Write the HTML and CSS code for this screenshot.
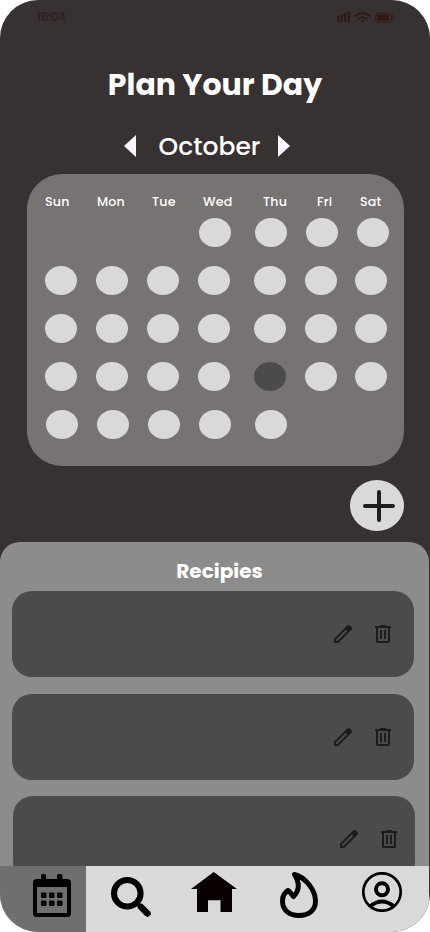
FILE: index.html
```html
<!DOCTYPE html>
<html lang="en">
<head>
<meta charset="utf-8">
<title>Plan Your Day</title>
<link rel="stylesheet" href="styles.css">
</head>
<body>
<svg width="0" height="0" class="defs">
  <symbol id="edit" viewBox="0 -960 960 960"><path d="M200-200h57l391-391-57-57-391 391v57Zm-80 80v-170l528-527q12-11 26.5-17t30.5-6q16 0 31 6t26 18l55 56q12 11 17.5 26t5.5 30q0 16-5.5 30.5T817-647L290-120H120Zm640-584-56-56 56 56Zm-141 85-28-29 57 57-29-28Z"/></symbol>
  <symbol id="trash" viewBox="0 -960 960 960"><path d="M280-120q-33 0-56.5-23.5T200-200v-520h-40v-80h200v-40h240v40h200v80h-40v520q0 33-23.5 56.5T680-120H280Zm400-600H280v520h400v-520ZM360-280h80v-360h-80v360Zm160 0h80v-360h-80v360Z"/></symbol>
</svg>
<div class="phone">
  <header class="status">
    <span class="time">16:04</span>
    <svg class="signals" width="58" height="12" viewBox="0 0 58 12">
      <path d="M1.2 6v4.500M4.700 4.500v6M8.200 3v7.500M11.700 1.500v9" fill="none" stroke="currentColor" stroke-width="2.300" stroke-linecap="round"/>
      <path d="M18 5q7.500-6 15 0M21 8q4.500-3.500 9 0" fill="none" stroke="currentColor" stroke-width="1.700" stroke-linecap="round"/>
      <circle cx="25.500" cy="10" r="1.300"/>
      <rect x="38.800" y="2.300" width="15.500" height="9" rx="2" fill="none" stroke="currentColor"/>
      <rect x="40" y="3.700" width="12" height="6.300"/>
      <path d="M55 3.200q2 1 2 3.500t-2 3.500" fill="none" stroke="currentColor"/>
    </svg>
  </header>

  <h1 class="title">Plan Your Day</h1>

  <div class="month">
    <svg width="12" height="22" viewBox="0 0 12 22"><path d="M12 0v22L0 11z"/></svg>
    <span class="month-name">October</span>
    <svg width="12" height="22" viewBox="0 0 12 22"><path d="M0 0v22l12-11z"/></svg>
  </div>

  <section class="calendar">
    <div class="weekdays"><span>Sun</span><span>Mon</span><span>Tue</span><span>Wed</span><span>Thu</span><span>Fri</span><span>Sat</span></div>
    <div class="week first"><i></i><i></i><i></i><i class="day"></i><i class="day"></i><i class="day"></i><i class="day"></i></div>
    <div class="week"><i class="day"></i><i class="day"></i><i class="day"></i><i class="day"></i><i class="day"></i><i class="day"></i><i class="day"></i></div>
    <div class="week"><i class="day"></i><i class="day"></i><i class="day"></i><i class="day"></i><i class="day"></i><i class="day"></i><i class="day"></i></div>
    <div class="week"><i class="day"></i><i class="day"></i><i class="day"></i><i class="day"></i><i class="day selected"></i><i class="day"></i><i class="day"></i></div>
    <div class="week last"><i class="day"></i><i class="day"></i><i class="day"></i><i class="day"></i><i class="day"></i></div>
  </section>

  <button class="add" aria-label="Add"><svg width="54" height="51" viewBox="0 0 54 51"><path d="M29 12v28M15 26h28" fill="none" stroke="#1e1e1e" stroke-width="4" stroke-linecap="round"/></svg></button>

  <section class="sheet">
    <h2 class="sheet-title">Recipies</h2>
    <div class="recipes">
      <article class="recipe"><svg class="tool"><use href="#edit"/></svg><svg class="tool"><use href="#trash"/></svg></article>
      <article class="recipe"><svg class="tool"><use href="#edit"/></svg><svg class="tool"><use href="#trash"/></svg></article>
      <article class="recipe cut"><svg class="tool"><use href="#edit"/></svg><svg class="tool"><use href="#trash"/></svg></article>
    </div>
  </section>

  <nav class="tabs">
    <a class="tab active"><svg width="38" height="43" viewBox="0 0 38 43">
      <path fill-rule="evenodd" d="M4 5h4V1.500Q8 0 9.500 0h2Q13 0 13 1.500V5h11V1.500Q24 0 25.500 0h2.500q1.500 0 1.500 1.500V5H34q4 0 4 4v30q0 4-4 4H4q-4 0-4-4V9q0-4 4-4ZM4 13v26h30V13Z"/>
      <g><rect x="8" y="18.500" width="5.500" height="5.500" rx="1"/><rect x="16" y="18.500" width="5.500" height="5.500" rx="1"/><rect x="24" y="18.500" width="5.500" height="5.500" rx="1"/><rect x="8" y="26.500" width="5.500" height="5.500" rx="1"/><rect x="16" y="26.500" width="5.500" height="5.500" rx="1"/><rect x="24" y="26.500" width="5.500" height="5.500" rx="1"/></g>
    </svg></a>
    <a class="tab search"><svg width="40" height="40" viewBox="0 0 40 40">
      <circle cx="16.300" cy="16.300" r="13.300" fill="none" stroke="#000" stroke-width="6"/>
      <path d="M25.500 25.500l4 4" stroke="#000" stroke-width="4"/>
      <path d="M30 30l6.500 6.500" stroke="#000" stroke-width="6.500" stroke-linecap="round"/>
    </svg></a>
    <a class="tab home"><svg width="46" height="40" viewBox="0 0 46 40"><path fill="#080003" d="M22.700 0 46 17h-5v23H29.500V28.300H17V40H6V17H0Z"/></svg></a>
    <a class="tab flame"><svg width="38" height="46" viewBox="0 0 38 46"><path d="M14.500 2.500C25 5 35.500 18 35.500 29c0 9-6.500 14.500-16.500 14.500S2.500 38 2.500 29c0-5 2-8.500 5.500-10.500 2 1 3 3.500 5.500 6C17 21 19 16 18 11c-.5-3.500-2-6-3.500-8.500Z" fill="none" stroke="#000" stroke-width="5" stroke-linejoin="round"/></svg></a>
    <a class="tab profile"><svg width="40" height="40" viewBox="0 0 40 40" fill="none" stroke="#000">
      <circle cx="20" cy="20" r="18.700" stroke-width="2.700"/>
      <circle cx="20" cy="17.300" r="6" stroke-width="4"/>
      <path d="M8 34.500q12-10 24 0" stroke-width="4"/>
    </svg></a>
  </nav>
</div>
</body>
</html>
```
FILE: styles.css
```css
* { box-sizing: border-box; }
body { margin: 0; background: #fff; font-family: Poppins, Inter, sans-serif; color: #fff; }
svg { display: block; flex: none; }
.defs { position: absolute; }
.phone {
  width: 430px; height: 932px; overflow: hidden;
  display: flex; flex-direction: column;
  background: #373131; clip-path: inset(0 round 38px);
}
.status {
  height: 34px; flex: none; padding: 11px 35px 0 37px;
  display: flex; justify-content: space-between;
  color: #2f1a18; fill: #2f1a18;
}
.time { font-size: 12px; line-height: 11px; font-weight: 500; letter-spacing: -.4px; color: #2e1f1e; }
.title {
  margin: 30px 0 0; height: 40px; flex: none; line-height: 42px;
  text-align: center; font-size: 30px; font-weight: 700;
}
.month {
  margin: 26px 0 0 124px; width: 166px; height: 32px; flex: none;
  display: flex; align-items: center; justify-content: space-between;
  fill: #fdf5ff;
}
.month-name { font-size: 25px; line-height: 32px; font-weight: 500; margin: 2px 0 0 5px; white-space: nowrap; }
.calendar {
  margin: 12px 0 0 27px; width: 377px; height: 292px; flex: none;
  padding: 18px 0 0 18px; border-radius: 35px; background: #777372;
}
.weekdays {
  display: grid; grid-template-columns: 52px 55px 51px 60px 54px 43px 30px;
  height: 26px; line-height: 20px; font-size: 12.6px; font-weight: 500; letter-spacing: .2px;
}
.week {
  display: grid; grid-template-columns: 51px 51px 51px 56px 51px 50px 32px;
  height: 29px; margin-bottom: 19px;
}
.week.first { grid-template-columns: 51px 51px 51px 56px 51px 51px 32px; }
.week.first, .week.last { margin-left: 1px; }
.day { width: 32px; height: 29px; border-radius: 50%; background: #d9d9d9; }
.selected { background: #4b4b4b; }
.add {
  margin: 14px 26px 0 auto; width: 54px; height: 51px; flex: none;
  padding: 0; border: 0; border-radius: 50%; background: #d9d9d9;
}
.sheet {
  margin-top: 11px; width: 429px; height: 324px; flex: none; overflow: hidden;
  border-radius: 20px 20px 0 0; background: #8c8c8c;
}
.sheet-title {
  margin: 0 0 0 10px; padding-top: 14px; height: 49px;
  text-align: center; font-size: 20px; line-height: 30px; font-weight: 700;
}
.recipes { margin-left: 12px; display: grid; }
.recipe {
  width: 402px; height: 86px; margin-bottom: 17px; padding: 31px 19px 0 0;
  display: flex; justify-content: flex-end; gap: 16px;
  border-radius: 20px; background: #4b4b4b;
}
.cut { margin: -1px 0 0 1px; padding-right: 14px; }
.tool { width: 24px; height: 24px; fill: #1d1b20; }
.tabs {
  width: 429px; height: 66px; flex: none; display: flex;
  background: #d9d9d9;
}
.tab { padding-top: 6px; }
.active { width: 86px; padding: 8px 0 0 33px; background: #6f6f6f; }
.search { margin-left: 25px; padding-top: 11px; }
.home { margin-left: 40px; }
.flame { margin-left: 43px; }
.profile { margin-left: 44px; }
```
